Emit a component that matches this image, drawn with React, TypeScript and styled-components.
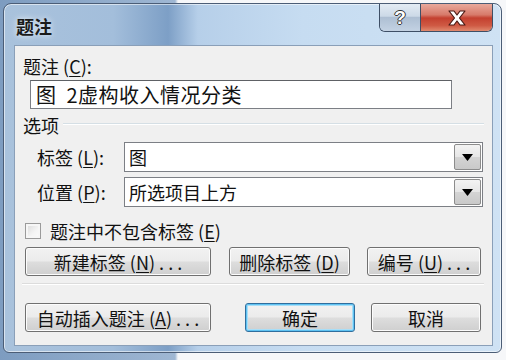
import React from "react";
import styled, { createGlobalStyle } from "styled-components";

const GlobalStyle = createGlobalStyle`
	html, body {
		margin: 0;
		padding: 0;
	}
	body {
		width: 506px;
		height: 360px;
		overflow: hidden;
		background: linear-gradient(to right, #7d9cc0 0, #9fb7d3 175px, #f6f7f9 178px, #f6f7f9 100%);
		font-family: "Noto Sans CJK SC", "Liberation Sans", sans-serif;
		color: #111;
	}
`;

const Window = styled.div`
	box-sizing: border-box;
	display: flex;
	flex-direction: column;
	width: 499px;
	height: 350px;
	margin: 3px 0 0 3px;
	padding: 0 8px 6px 10px;
	border: 1px solid #4b5d76;
	border-radius: 8px 8px 6px 6px;
	background: linear-gradient(
		to right,
		#a9c2dc 0%,
		#a3bedb 22%,
		#7d9fc6 33%,
		#b6cfe9 39%,
		#c6dcf1 60%,
		#cfe2f4 100%
	);
	box-shadow: inset 0 0 0 1px rgba(255, 255, 255, 0.55);
`;

const TitleBar = styled.div`
	display: flex;
	align-items: flex-start;
	height: 41px;
	flex-shrink: 0;
`;

const Title = styled.div`
	margin: 13px 0 0 2px;
	font-size: 18px;
	line-height: 18px;
	font-weight: 700;
	color: #1a1a1a;
	text-shadow: 0 0 6px rgba(255, 255, 255, 0.9);
	flex: 1;
`;

const CaptionButtons = styled.div`
	display: flex;
	height: 28px;
	border: 1px solid #3e4f66;
	border-top: none;
	border-radius: 0 0 6px 6px;
	overflow: hidden;
	box-sizing: border-box;
`;

const HelpButton = styled.div`
	width: 40px;
	display: flex;
	align-items: center;
	justify-content: center;
	background: linear-gradient(#e3ebf4 0%, #ccd9e7 45%, #aebfd3 50%, #c3d2e3 100%);
	border-right: 1px solid #3e4f66;
	font-family: "Liberation Sans", sans-serif;
	font-weight: 700;
	font-size: 19px;
	color: #fff;
	text-shadow: 1px 0 0 #333, -1px 0 0 #333, 0 1px 0 #333, 0 -1px 0 #333;
`;

const CloseButton = styled.div`
	width: 71px;
	display: flex;
	align-items: center;
	justify-content: center;
	background: linear-gradient(#e9a99c 0%, #d77a6a 40%, #c4402f 52%, #cf5a44 80%, #e08a6f 100%);
`;

const Client = styled.div`
	flex: 1;
	display: flex;
	flex-direction: column;
	background: #f0f0f0;
	border: 1px solid #8a9fb8;
`;

const Label = styled.div`
	font-size: 18px;
	line-height: 18px;
	white-space: nowrap;
`;

const Key = styled.span`
	text-decoration: underline;
	text-underline-offset: 2px;
`;

const CaptionLabel = styled(Label)`
	margin: 11px 0 0 8px;
`;

const TextBox = styled.div`
	box-sizing: border-box;
	width: 422px;
	height: 29px;
	margin: 5px 0 0 15px;
	padding-left: 5px;
	display: flex;
	align-items: center;
	background: #fff;
	border: 1px solid #7c7f85;
	border-top-color: #5e6165;
	font-size: 20px;
	letter-spacing: 0.5px;
	white-space: pre;
`;

const GroupHeader = styled.div`
	display: flex;
	align-items: center;
	gap: 4px;
	margin: 7px 8px 0 8px;
`;

const GroupLine = styled.div`
	flex: 1;
	height: 1px;
	margin-top: -3px;
	background: #d5dfe5;
	border-bottom: 1px solid #fff;
`;

const FieldRow = styled.div<{ $top: number }>`
	display: flex;
	align-items: center;
	margin: ${(p) => p.$top}px 0 0 22px;
`;

const FieldLabel = styled(Label)`
	width: 87px;
`;

const Select = styled.div`
	box-sizing: border-box;
	width: 359px;
	height: 30px;
	display: flex;
	align-items: stretch;
	background: #fff;
	border: 1px solid #7c7f85;
`;

const SelectText = styled.div`
	flex: 1;
	display: flex;
	align-items: center;
	padding-left: 4px;
	font-size: 18px;
`;

const SelectArrow = styled.div`
	width: 25px;
	margin: 1px;
	display: flex;
	align-items: center;
	justify-content: center;
	border: 1px solid #8c8c8c;
	border-radius: 2px;
	background: linear-gradient(#f3f3f3 0%, #e6e6e6 50%, #d4d4d4 51%, #c9c9c9 100%);
`;

const CheckRow = styled.div`
	display: flex;
	align-items: center;
	gap: 9px;
	margin: 14px 0 0 10px;
	height: 19px;
`;

const CheckBox = styled.div`
	box-sizing: border-box;
	width: 16px;
	height: 16px;
	border: 1px solid #9a9a9a;
	background: linear-gradient(135deg, #d9d9d9 0%, #f4f4f4 60%, #fbfbfb 100%);
	box-shadow: inset 0 0 0 2px #f6f6f6;
`;

const ButtonRow = styled.div<{ $top: number }>`
	display: flex;
	margin: ${(p) => p.$top}px 0 0 10px;
`;

const Button = styled.div<{ $w: number; $gap?: number; $focus?: boolean }>`
	box-sizing: border-box;
	width: ${(p) => p.$w}px;
	height: 29px;
	margin-left: ${(p) => p.$gap ?? 0}px;
	display: flex;
	align-items: center;
	justify-content: center;
	border: 1px solid ${(p) => (p.$focus ? "#2f6e9e" : "#707070")};
	border-radius: 3px;
	background: linear-gradient(#f2f2f2 0%, #ebebeb 48%, #dddddd 52%, #cfcfcf 100%);
	box-shadow: ${(p) =>
		p.$focus
			? "inset 0 0 0 1px #5ec2f2, inset 0 0 0 2px #a9def7"
			: "inset 0 0 0 1px #fcfcfc"};
	font-size: 18px;
	line-height: 18px;
	white-space: pre;
`;

const Separator = styled.div`
	height: 1px;
	margin: 7px 8px 0 7px;
	background: #dcdcdc;
	border-bottom: 1px solid #fff;
`;

const Mn = ({ k }: { k: string }) => (
	<>
		(<Key>{k}</Key>)
	</>
);

export default function App() {
	return (
		<>
			<GlobalStyle />
			<Window>
				<TitleBar>
					<Title>题注</Title>
					<CaptionButtons>
						<HelpButton>?</HelpButton>
						<CloseButton>
							<svg width="22" height="16" viewBox="0 0 22 16">
								<path
									d="M3 1h5l3 4 3-4h5l-5.5 7 5.5 7h-5l-3-4-3 4h-5l5.5-7z"
									fill="#fff"
									stroke="#4a1a14"
									strokeWidth="1.2"
									strokeLinejoin="round"
								/>
							</svg>
						</CloseButton>
					</CaptionButtons>
				</TitleBar>
				<Client>
					<CaptionLabel>
						题注 <Mn k="C" />:
					</CaptionLabel>
					<TextBox>{"图  2虚构收入情况分类"}</TextBox>
					<GroupHeader>
						<Label>选项</Label>
						<GroupLine />
					</GroupHeader>
					<FieldRow $top={8}>
						<FieldLabel>
							标签 <Mn k="L" />:
						</FieldLabel>
						<Select>
							<SelectText>图</SelectText>
							<SelectArrow>
								<svg width="11" height="7" viewBox="0 0 11 7">
									<path d="M0 0h11L5.5 7z" fill="#000" />
								</svg>
							</SelectArrow>
						</Select>
					</FieldRow>
					<FieldRow $top={5}>
						<FieldLabel>
							位置 <Mn k="P" />:
						</FieldLabel>
						<Select>
							<SelectText>所选项目上方</SelectText>
							<SelectArrow>
								<svg width="11" height="7" viewBox="0 0 11 7">
									<path d="M0 0h11L5.5 7z" fill="#000" />
								</svg>
							</SelectArrow>
						</Select>
					</FieldRow>
					<CheckRow>
						<CheckBox />
						<Label>
							题注中不包含标签 <Mn k="E" />
						</Label>
					</CheckRow>
					<ButtonRow $top={7}>
						<Button $w={186}>
							新建标签 <Mn k="N" />
							{" . . ."}
						</Button>
						<Button $w={121} $gap={18}>
							删除标签 <Mn k="D" />
						</Button>
						<Button $w={114} $gap={17}>
							编号 <Mn k="U" />
							{" . . ."}
						</Button>
					</ButtonRow>
					<Separator />
					<ButtonRow $top={18}>
						<Button $w={186}>
							自动插入题注 <Mn k="A" />
							{" . . ."}
						</Button>
						<Button $w={110} $gap={34} $focus>
							确定
						</Button>
						<Button $w={110} $gap={16}>
							取消
						</Button>
					</ButtonRow>
				</Client>
			</Window>
		</>
	);
}
